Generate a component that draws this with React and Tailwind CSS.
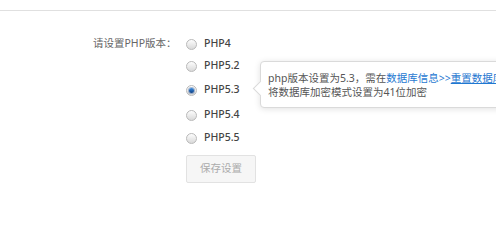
const VERSIONS = [
  { label: 'PHP4', h: 'h-[22px]' },
  { label: 'PHP5.2', h: 'h-[22px]' },
  { label: 'PHP5.3', h: 'h-[26px]', checked: true },
  { label: 'PHP5.4', h: 'h-[24px]' },
  { label: 'PHP5.5', h: 'h-[22px]' },
]

function Radio({ checked }) {
  return (
    <span className="relative flex h-[11px] w-[11px] shrink-0 items-center justify-center rounded-full border border-[#b9b9b9] bg-gradient-to-b from-[#fdfdfd] to-[#d9d9d9]">
      {checked && (
        <span className="h-[5px] w-[5px] rounded-full bg-gradient-to-b from-[#3d8ee0] to-[#0d3f86] shadow-[0_0_0_1px_rgba(20,70,140,0.35)]" />
      )}
    </span>
  )
}

export default function App() {
  return (
    <div
      className="relative h-[244px] w-full overflow-hidden bg-white text-[10.5px]"
      style={{ fontFamily: '"Noto Sans", "Noto Sans CJK SC", sans-serif' }}
    >
      <div className="h-[11px] border-b border-[#e0e0e0]" />

      <div className="flex pt-[22px]">
        <div className="flex h-[22px] w-[186px] shrink-0 items-center pl-[93px] text-[#666]">
          请设置PHP版本：
        </div>
        <div className="flex flex-col">
          {VERSIONS.map((v) => (
            <label key={v.label} className={`flex ${v.h} items-center gap-[7px] text-[#444]`}>
              <Radio checked={v.checked} />
              <span className="font-medium">{v.label}</span>
            </label>
          ))}
        </div>
      </div>

      <div className="pl-[186px] pt-[6px]">
        <button className="flex h-[28px] w-[70px] items-center justify-center rounded-[2px] border border-[#e2e2e2] bg-[#f6f6f6] text-[#ababab]">
          保存设置
        </button>
      </div>

      {/* tooltip */}
      <div className="absolute left-[260px] top-[61px] h-[47px] w-[300px] rounded-[4px] border border-[#dadada] bg-white px-[7px] pt-[9px] leading-[14px] text-[#555] shadow-[0_1px_6px_rgba(0,0,0,0.12)]">
        <span className="absolute left-[-6.5px] top-[21px] h-[11px] w-[11px] rotate-45 border-b border-l border-[#dadada] bg-white" />
        <div className="whitespace-nowrap">
          php版本设置为5.3，需在<span className="text-[#1f78d1]">数据库信息&gt;&gt;</span>
          <span className="text-[#1f78d1] underline">重置数据库</span>
        </div>
        <div className="whitespace-nowrap">将数据库加密模式设置为41位加密</div>
      </div>
    </div>
  )
}
